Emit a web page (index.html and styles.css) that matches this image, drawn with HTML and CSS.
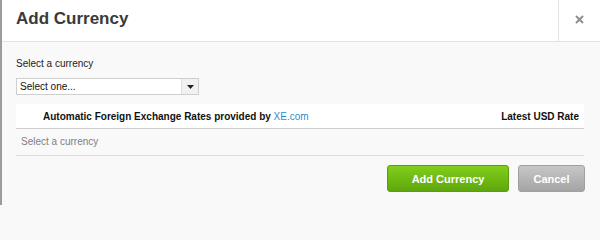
FILE: index.html
```html
<!DOCTYPE html>
<html>
<head>
<meta charset="utf-8">
<link rel="stylesheet" href="styles.css">
</head>
<body>
<div class="modal">
  <div class="header">
    <div class="title">Add Currency</div>
    <div class="close">
      <svg width="9" height="9" viewBox="0 0 9 9"><path d="M1 1L8 8M8 1L1 8" stroke="#8f8f8f" stroke-width="2"/></svg>
    </div>
  </div>
  <div class="body">
    <div class="label">Select a currency</div>
    <div class="select">
      <span class="select-text">Select one...</span>
      <span class="select-arrow"><svg width="7" height="4" viewBox="0 0 7 4"><path d="M0 0H7L3.5 4Z" fill="#222"/></svg></span>
    </div>
    <div class="table">
      <div class="thead">
        <span class="provider">Automatic Foreign Exchange Rates provided by <a class="xe">XE.com</a></span>
        <span class="rate">Latest USD Rate</span>
      </div>
      <div class="trow">Select a currency</div>
    </div>
    <div class="footer">
      <button class="btn btn-add">Add Currency</button>
      <button class="btn btn-cancel">Cancel</button>
    </div>
  </div>
</div>
</body>
</html>
```
FILE: styles.css
```css
html, body {
  margin: 0;
  padding: 0;
  background: #f9f9f9;
}
.modal {
  width: 598px;
  height: 205px;
  border-left: 2px solid #9c9c9c;
  font-family: "Liberation Sans", Arial, sans-serif;
  background: #f9f9f9;
  overflow: hidden;
}
.header {
  height: 41px;
  display: flex;
  align-items: stretch;
  background: #fff;
  border-bottom: 1px solid #e2e2e2;
}
.title {
  padding-left: 14px;
  font-size: 17px;
  font-weight: bold;
  color: #3a3a3a;
  line-height: 38px;
}
.close {
  margin-left: auto;
  width: 41px;
  border-left: 1px solid #e2e2e2;
  display: flex;
  align-items: center;
  justify-content: center;
  padding-bottom: 2px;
}
.body {
  padding: 0 14px 0 14px;
}
.label {
  margin-top: 15px;
  font-size: 10px;
  line-height: 14px;
  color: #222;
}
.select {
  margin-top: 7px;
  width: 181px;
  height: 15px;
  border: 1px solid #cfcfcf;
  background: #fff;
  display: flex;
  align-items: stretch;
}
.select-text {
  flex: 1;
  font-size: 10px;
  line-height: 15px;
  padding-left: 3px;
  color: #111;
}
.select-arrow {
  width: 16px;
  border-left: 1px solid #e0e0e0;
  background: #f1f1f1;
  display: flex;
  align-items: center;
  justify-content: center;
}
.table {
  margin-top: 9px;
  width: 568px;
}
.thead {
  height: 24px;
  background: #fff;
  border-bottom: 1px solid #cfcfcf;
  display: flex;
  align-items: center;
  font-size: 10px;
  font-weight: bold;
  color: #111;
}
.provider {
  padding-left: 27px;
}
.xe {
  font-weight: normal;
  color: #2d8fd0;
}
.rate {
  margin-left: auto;
  padding-right: 5px;
}
.trow {
  height: 26px;
  line-height: 26px;
  border-bottom: 1px solid #dcdcdc;
  font-size: 10px;
  color: #808080;
  padding-left: 5px;
}
.footer {
  margin-top: 9px;
  display: flex;
  justify-content: flex-end;
  gap: 9px;
  width: 569px;
}
.btn {
  height: 27px;
  border-radius: 3px;
  font-family: "Liberation Sans", Arial, sans-serif;
  font-size: 11px;
  font-weight: bold;
  color: #fff;
  padding: 0;
  cursor: pointer;
}
.btn-add {
  width: 122px;
  background: linear-gradient(#82ce1c, #5ea60c);
  border: 1px solid #5a9d0d;
}
.btn-cancel {
  width: 67px;
  background: linear-gradient(#c7c7c7, #a4a4a4);
  border: 1px solid #a0a0a0;
}
```
